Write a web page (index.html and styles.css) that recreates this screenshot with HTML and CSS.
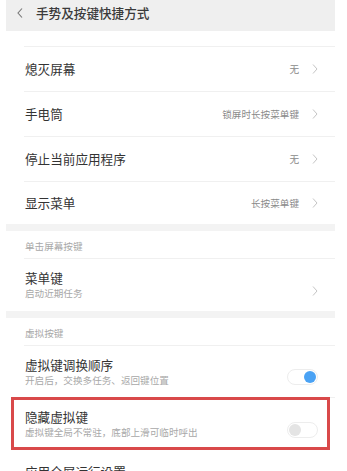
FILE: index.html
```html
<!DOCTYPE html>
<html lang="zh">
<head>
<meta charset="utf-8">
<link rel="stylesheet" href="styles.css">
</head>
<body>
<div class="screen">
  <div class="topbar">
    <svg class="back" width="6" height="10" viewBox="0 0 6 10"><polyline points="5,0.5 1,5 5,9.5" fill="none" stroke="#777" stroke-width="1.1"/></svg>
    <span class="topbar-title">手势及按键快捷方式</span>
  </div>
  <div class="spacer"></div>
  <div class="row">
    <span class="row-title">熄灭屏幕</span>
    <span class="row-value">无</span>
    <svg class="chev" width="6" height="10" viewBox="0 0 6 10"><polyline points="1,0.5 5,5 1,9.5" fill="none" stroke="#c4c4c4" stroke-width="1"/></svg>
  </div>
  <div class="row">
    <span class="row-title">手电筒</span>
    <span class="row-value">锁屏时长按菜单键</span>
    <svg class="chev" width="6" height="10" viewBox="0 0 6 10"><polyline points="1,0.5 5,5 1,9.5" fill="none" stroke="#c4c4c4" stroke-width="1"/></svg>
  </div>
  <div class="row">
    <span class="row-title">停止当前应用程序</span>
    <span class="row-value">无</span>
    <svg class="chev" width="6" height="10" viewBox="0 0 6 10"><polyline points="1,0.5 5,5 1,9.5" fill="none" stroke="#c4c4c4" stroke-width="1"/></svg>
  </div>
  <div class="row row-last">
    <span class="row-title">显示菜单</span>
    <span class="row-value">长按菜单键</span>
    <svg class="chev" width="6" height="10" viewBox="0 0 6 10"><polyline points="1,0.5 5,5 1,9.5" fill="none" stroke="#c4c4c4" stroke-width="1"/></svg>
  </div>
  <div class="band"></div>
  <div class="section">单击屏幕按键</div>
  <div class="row row-tall row-last">
    <div class="row-text">
      <span class="row-title">菜单键</span>
      <span class="row-sub">启动近期任务</span>
    </div>
    <svg class="chev" width="6" height="10" viewBox="0 0 6 10"><polyline points="1,0.5 5,5 1,9.5" fill="none" stroke="#c4c4c4" stroke-width="1"/></svg>
  </div>
  <div class="band"></div>
  <div class="section">虚拟按键</div>
  <div class="row row-tall">
    <div class="row-text">
      <span class="row-title">虚拟键调换顺序</span>
      <span class="row-sub">开启后，交换多任务、返回键位置</span>
    </div>
    <span class="toggle toggle-on"><span class="knob"></span></span>
  </div>
  <div class="row row-tall row-marked">
    <div class="row-text">
      <span class="row-title">隐藏虚拟键</span>
      <span class="row-sub">虚拟键全局不常驻，底部上滑可临时呼出</span>
    </div>
    <span class="toggle toggle-off"><span class="knob"></span></span>
  </div>
  <div class="row">
    <span class="row-title">应用全屏运行设置</span>
  </div>
</div>
</body>
</html>
```

FILE: styles.css
```css
html, body {
  margin: 0;
  padding: 0;
  background: #ffffff;
}
body {
  font-family: "Noto Sans CJK SC", "Noto Sans", sans-serif;
  color: #333333;
  overflow: hidden;
}
.screen {
  margin-left: 6px;
  width: 329px;
  background: #ffffff;
}
.topbar {
  height: 31px;
  background: #efefef;
  display: flex;
  align-items: center;
  box-sizing: border-box;
  padding-left: 11px;
  padding-bottom: 5px;
}
.back {
  display: block;
}
.topbar-title {
  margin-left: 13px;
  font-size: 12.6px;
  line-height: 16px;
  font-weight: 500;
  color: #3a3a3a;
}
.spacer {
  height: 16px;
  box-sizing: border-box;
  margin-left: 18px;
  border-bottom: 1px solid #f0f0f0;
}
.row {
  height: 45px;
  box-sizing: border-box;
  margin-left: 18px;
  padding-left: 1px;
  padding-right: 17px;
  border-bottom: 1px solid #f0f0f0;
  display: flex;
  align-items: center;
}
.row-last {
  height: 42px;
  border-bottom: none;
}
.row-tall {
  height: 52px;
  align-items: flex-start;
  padding-top: 11px;
}
.row-tall.row-last {
  height: 52px;
}
.row-tall .chev,
.row-tall .toggle {
  align-self: center;
}
.row-text {
  flex: 1;
  display: flex;
  flex-direction: column;
}
.row-title {
  flex: 1;
  font-size: 12.6px;
  line-height: 16px;
  color: #333333;
}
.row-sub {
  font-size: 9.6px;
  line-height: 15px;
  color: #a8a8a8;
}
.row-value {
  font-size: 9.6px;
  line-height: 14px;
  color: #8a8a8a;
  margin-right: 13px;
}
.chev {
  display: block;
}
.band {
  height: 7px;
  background: #f3f3f3;
}
.section {
  height: 28px;
  box-sizing: border-box;
  margin-left: 18px;
  padding-left: 1px;
  padding-top: 8px;
  font-size: 9.6px;
  line-height: 14px;
  color: #a8a8a8;
  border-bottom: 1px solid #f0f0f0;
}
.toggle {
  width: 31px;
  height: 16px;
  box-sizing: border-box;
  border-radius: 8px;
  border: 1px solid #ededed;
  background: #ffffff;
  display: flex;
  align-items: center;
  padding: 0 1px;
}
.knob {
  width: 12px;
  height: 12px;
  border-radius: 50%;
}
.toggle-on {
  justify-content: flex-end;
}
.toggle-on .knob {
  background: #4aa2f4;
}
.toggle-off .knob {
  background: #e4e4e4;
}
.row-marked {
  position: relative;
  border-bottom: none;
}
.row-marked::after {
  content: "";
  position: absolute;
  left: -13px;
  right: 5px;
  top: -1px;
  bottom: 0px;
  border: 3px solid #d9494a;
}
```
